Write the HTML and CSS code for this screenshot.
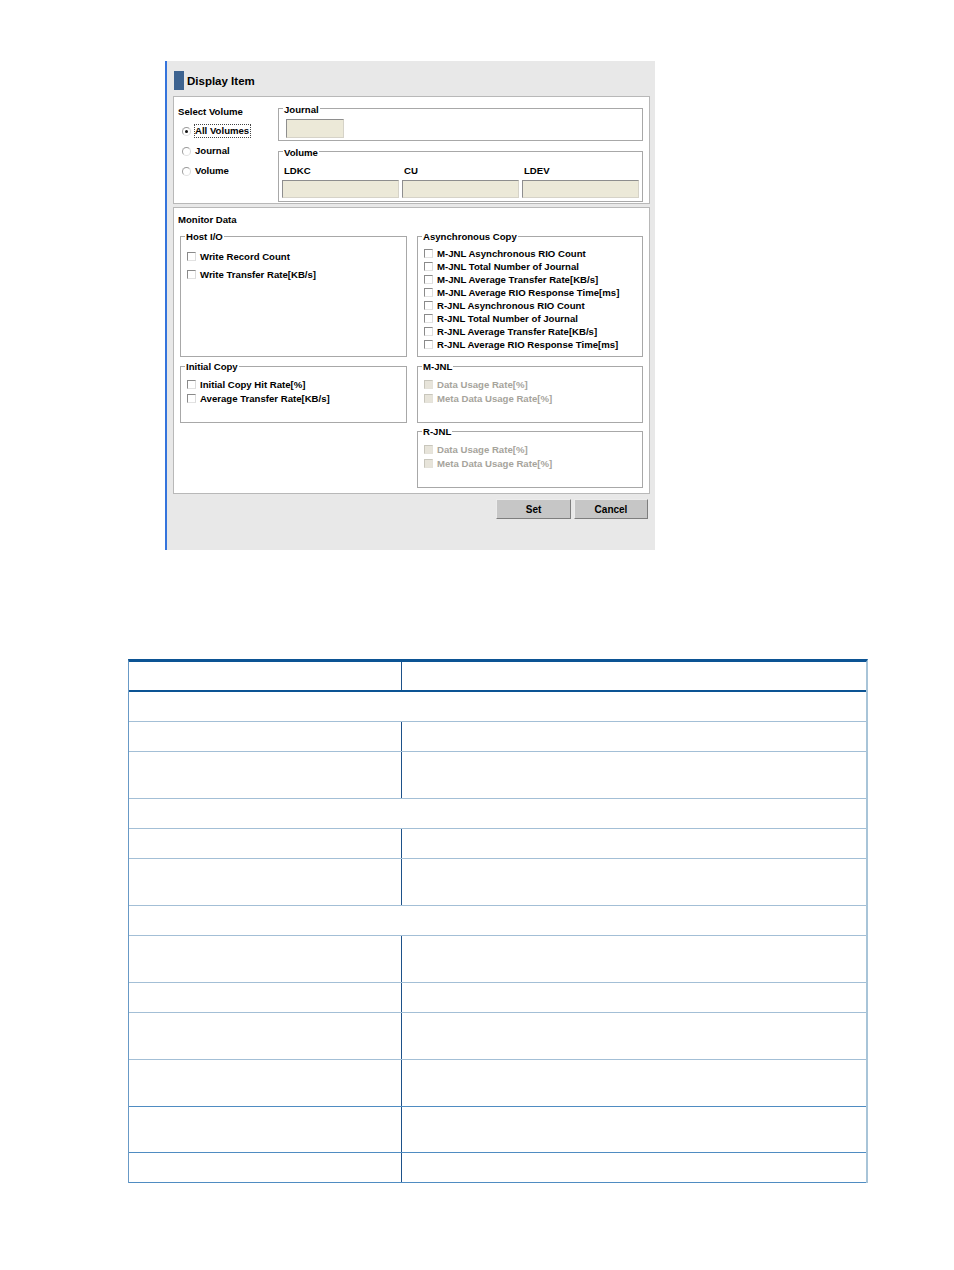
FILE: index.html
```html
<!DOCTYPE html>
<html lang="en">
<head>
    <meta charset="UTF-8">
    <meta name="viewport" content="width=device-width, initial-scale=1.0">
    <title>Display Item</title>
    <link rel="stylesheet" href="styles.css">
</head>
<body>
<div class="shot">
    <div class="dlg-title">
        <span class="title-mark"></span>
        <span class="title-text">Display Item</span>
    </div>

    <div class="panel panel-volume">
        <div class="select-col">
            <div class="label">Select Volume</div>
            <div class="radio-list">
                <div class="radio-row"><span class="radio on"></span><span class="radio-text focus">All Volumes</span></div>
                <div class="radio-row"><span class="radio"></span><span class="radio-text">Journal</span></div>
                <div class="radio-row"><span class="radio"></span><span class="radio-text">Volume</span></div>
            </div>
        </div>
        <div class="vol-col">
            <div class="group group-journal">
                <div class="group-title">Journal</div>
                <div class="field field-journal"></div>
            </div>
            <div class="group group-volume">
                <div class="group-title">Volume</div>
                <div class="vol-grid">
                    <div class="vol-label">LDKC</div>
                    <div class="vol-label">CU</div>
                    <div class="vol-label">LDEV</div>
                    <div class="field"></div>
                    <div class="field"></div>
                    <div class="field"></div>
                </div>
            </div>
        </div>
    </div>

    <div class="panel panel-monitor">
        <div class="label">Monitor Data</div>
        <div class="monitor-grid">
            <div class="monitor-col">
                <div class="group group-big">
                    <div class="group-title">Host I/O</div>
                    <div class="check-list loose">
                        <div class="check-row"><span class="check"></span>Write Record Count</div>
                        <div class="check-row"><span class="check"></span>Write Transfer Rate[KB/s]</div>
                    </div>
                </div>
                <div class="group group-small">
                    <div class="group-title">Initial Copy</div>
                    <div class="check-list">
                        <div class="check-row"><span class="check"></span>Initial Copy Hit Rate[%]</div>
                        <div class="check-row"><span class="check"></span>Average Transfer Rate[KB/s]</div>
                    </div>
                </div>
            </div>
            <div class="monitor-col">
                <div class="group group-big">
                    <div class="group-title">Asynchronous Copy</div>
                    <div class="check-list tight">
                        <div class="check-row"><span class="check"></span>M-JNL Asynchronous RIO Count</div>
                        <div class="check-row"><span class="check"></span>M-JNL Total Number of Journal</div>
                        <div class="check-row"><span class="check"></span>M-JNL Average Transfer Rate[KB/s]</div>
                        <div class="check-row"><span class="check"></span>M-JNL Average RIO Response Time[ms]</div>
                        <div class="check-row"><span class="check"></span>R-JNL Asynchronous RIO Count</div>
                        <div class="check-row"><span class="check"></span>R-JNL Total Number of Journal</div>
                        <div class="check-row"><span class="check"></span>R-JNL Average Transfer Rate[KB/s]</div>
                        <div class="check-row"><span class="check"></span>R-JNL Average RIO Response Time[ms]</div>
                    </div>
                </div>
                <div class="group group-small">
                    <div class="group-title">M-JNL</div>
                    <div class="check-list disabled">
                        <div class="check-row"><span class="check"></span>Data Usage Rate[%]</div>
                        <div class="check-row"><span class="check"></span>Meta Data Usage Rate[%]</div>
                    </div>
                </div>
                <div class="group group-small group-last">
                    <div class="group-title">R-JNL</div>
                    <div class="check-list disabled">
                        <div class="check-row"><span class="check"></span>Data Usage Rate[%]</div>
                        <div class="check-row"><span class="check"></span>Meta Data Usage Rate[%]</div>
                    </div>
                </div>
            </div>
        </div>
    </div>

    <div class="buttons">
        <button class="btn btn-set">Set</button>
        <button class="btn btn-cancel">Cancel</button>
    </div>
</div>

<div class="spec">
    <div class="row head"><div class="cell"></div><div class="cell col2"></div></div>
    <div class="row sec"><div class="cell"></div></div>
    <div class="row"><div class="cell"></div><div class="cell col2"></div></div>
    <div class="row tall"><div class="cell"></div><div class="cell col2"></div></div>
    <div class="row sec"><div class="cell"></div></div>
    <div class="row"><div class="cell"></div><div class="cell col2"></div></div>
    <div class="row tall"><div class="cell"></div><div class="cell col2"></div></div>
    <div class="row sec"><div class="cell"></div></div>
    <div class="row tall"><div class="cell"></div><div class="cell col2"></div></div>
    <div class="row"><div class="cell"></div><div class="cell col2"></div></div>
    <div class="row tall"><div class="cell"></div><div class="cell col2"></div></div>
    <div class="row tall mid"><div class="cell"></div><div class="cell col2"></div></div>
    <div class="row tall short mid"><div class="cell"></div><div class="cell col2"></div></div>
    <div class="row mid"><div class="cell"></div><div class="cell col2"></div></div>
</div>
</body>
</html>
```

FILE: styles.css
```css
* {
    margin: 0;
    padding: 0;
    box-sizing: border-box;
}

body {
    background-color: #fff;
    font-family: "Liberation Sans", Arial, sans-serif;
    font-size: 9.6px;
    font-weight: bold;
    color: #000;
}

/* screenshot of the dialog */
.shot {
    margin: 61px 0 0 165px;
    width: 490px;
    height: 489px;
    background-color: #e8e8e8;
    border-left: 2px solid #3574dc;
    padding-top: 10px;
}

.dlg-title {
    display: flex;
    align-items: center;
    height: 19px;
    margin: 0 0 6px 7px;
}

.title-mark {
    width: 10px;
    height: 19px;
    background-color: #3d6390;
    margin-right: 3px;
}

.title-text {
    font-size: 11.5px;
    padding-top: 1px;
}

.panel {
    margin-left: 6px;
    width: 477px;
    background-color: #fff;
    border: 1px solid #b8b8b8;
}

.label {
    line-height: 12px;
}

.panel-volume {
    display: grid;
    grid-template-columns: 104px 365px;
    padding-bottom: 1px;
}

.select-col {
    padding-left: 4px;
}

.select-col .label {
    margin-top: 9px;
}

.radio-list {
    margin-top: 3px;
}

.radio-row {
    display: flex;
    align-items: center;
    height: 20px;
    padding-left: 4px;
}

.radio {
    width: 9px;
    height: 9px;
    border-radius: 50%;
    border: 1px solid;
    border-color: #9a9a9a #d8d8d8 #e4e4e4 #a0a0a0;
    background-color: #fff;
    margin-right: 3px;
    position: relative;
}

.radio.on:after {
    content: "";
    position: absolute;
    left: 2px;
    top: 2px;
    width: 3px;
    height: 3px;
    border-radius: 50%;
    background-color: #111;
}

.radio-text {
    border: 1px dotted transparent;
    line-height: 12px;
    padding-right: 1px;
}

.radio-text.focus {
    border-color: #444;
}

.vol-col {
    padding-top: 11px;
}

.group {
    border: 1px solid #a8a8a8;
    background-color: #fff;
}

.group-title {
    display: table;
    margin: -7px 0 0 4px;
    padding: 1px 1px 0 1px;
    background-color: #fff;
    line-height: 12px;
}

.field {
    height: 18px;
    background-color: #ece9d8;
    border: 1px solid;
    border-color: #8e8e8e #d6d3c8 #d6d3c8 #8e8e8e;
}

.group-journal {
    padding-bottom: 2px;
}

.group-journal .group-title {
    padding-top: 2px;
}

.field-journal {
    width: 58px;
    height: 19px;
    margin: 3px 0 0 7px;
}

.group-volume {
    margin-top: 10px;
    padding: 0 2px 3px 3px;
}

.group-volume .group-title {
    padding-top: 2px;
    margin-left: 1px;
}

.vol-grid {
    display: grid;
    grid-template-columns: 117px 117px 117px;
    column-gap: 3px;
    margin-top: 6px;
}

.vol-label {
    line-height: 12px;
    padding-left: 2px;
    margin-bottom: 3px;
}

.panel-monitor {
    margin-top: 3px;
    padding: 0 6px 5px 6px;
}

.panel-monitor > .label {
    margin: 6px 0 0 -2px;
}

.monitor-grid {
    display: grid;
    grid-template-columns: 227px 226px;
    column-gap: 10px;
    margin-top: 10px;
}

.group-big {
    height: 121px;
}

.group-small {
    height: 57px;
    margin-top: 9px;
}

.group-last {
    margin-top: 8px;
}

.check-list {
    margin-top: 4px;
    padding-left: 6px;
}

.check-row {
    display: flex;
    align-items: center;
    height: 14px;
    white-space: nowrap;
}

.check-list.loose .check-row {
    height: 18px;
}

.check-list.tight .check-row {
    height: 13px;
}

.check {
    width: 9px;
    height: 9px;
    border: 1px solid;
    border-color: #8a8a8a #dcdcdc #e2e2e2 #8a8a8a;
    background-color: #fff;
    margin-right: 4px;
    flex-shrink: 0;
}

.check-list.disabled {
    color: #a6a49c;
}

.check-list.disabled .check {
    background-color: #e7e4da;
    border-color: #c8c6bc #e4e2da #e4e2da #c8c6bc;
}

.buttons {
    display: flex;
    justify-content: flex-end;
    gap: 3px;
    margin-top: 5px;
    padding-right: 7px;
}

.btn {
    height: 20px;
    width: 74px;
    font-family: "Liberation Sans", Arial, sans-serif;
    font-size: 10px;
    font-weight: bold;
    color: #000;
    background-color: #c6c6c6;
    border: 1px solid;
    border-color: #ececec #7e7e7e #7e7e7e #ececec;
}

.btn-set {
    width: 75px;
}

/* empty spec table below */
.spec {
    margin: 109px 0 0 128px;
    width: 740px;
    border-top: 3px solid #0c5494;
    border-left: 1px solid #6899c6;
    border-right: 2px solid #a8c4d8;
}

.row {
    display: grid;
    grid-template-columns: 272px 1fr;
    height: 30px;
    border-bottom: 1px solid #a3bfd6;
}

.row.head {
    border-bottom: 2px solid #0c5494;
}

.row.tall {
    height: 47px;
}

.row.tall.short {
    height: 46px;
}

.row.sec {
    grid-template-columns: 1fr;
}

.row.mid {
    border-bottom-color: #4f8cc2;
}

.col2 {
    border-left: 1px solid #1d5189;
}
```
